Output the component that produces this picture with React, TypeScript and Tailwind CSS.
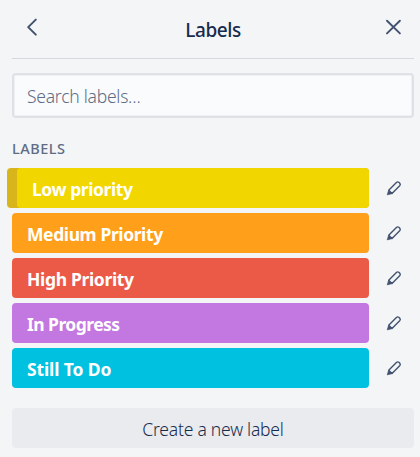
const labels = [
  { name: 'Low priority', color: 'bg-[#f2d600]', tracking: 'tracking-[-0.42px]', selected: true },
  { name: 'Medium Priority', color: 'bg-[#ff9f1a]', tracking: 'tracking-[-0.4px]', selected: false },
  { name: 'High Priority', color: 'bg-[#eb5a46]', tracking: 'tracking-[-0.34px]', selected: false },
  { name: 'In Progress', color: 'bg-[#c377e0]', tracking: 'tracking-[-0.55px]', selected: false },
  { name: 'Still To Do', color: 'bg-[#00c2e0]', tracking: 'tracking-[-0.12px]', selected: false },
];

function Pencil() {
  return (
    <svg width="16" height="16" viewBox="0 0 16 16" fill="none" stroke="#42526e" strokeWidth="1.4" strokeLinejoin="round">
      <path d="M2.7 10.2 10.4 2.5Q11.6 1.4 12.8 2.3L13.8 3.3Q14.8 4.6 13.7 5.8L6 13.5Z" />
      <path d="M2.5 10.4 1.2 14.9 5.8 13.7Z" fill="#42526e" strokeWidth="0.6" />
    </svg>
  );
}

export default function App() {
  return (
    <main className="h-[457px] w-[420px] overflow-hidden bg-[#f4f5f7] pl-3 pr-1.5 font-['Noto_Sans','Open_Sans',sans-serif] text-[#172b4d]">
      <header className="flex h-[59px] items-start justify-between border-b border-[#d5d8de]">
        <button aria-label="Back" className="ml-[10px] mt-[17px]">
          <svg width="20" height="20" viewBox="0 0 20 20" fill="none" stroke="#42526e" strokeWidth="2" strokeLinecap="round" strokeLinejoin="round">
            <path d="M13.8 2.6 6.2 10.1 13.8 17.6" />
          </svg>
        </button>
        <h1 className="mt-[15px] text-[19px] font-medium leading-[30px] tracking-[-0.45px]">Labels</h1>
        <button aria-label="Close" className="mr-[10px] mt-[17px]">
          <svg width="20" height="20" viewBox="0 0 20 20" fill="none" stroke="#42526e" strokeWidth="1.9" strokeLinecap="round">
            <path d="M3 3.7 15.9 16.4M15.9 3.7 3 16.4" />
          </svg>
        </button>
      </header>
      <input
        aria-label="Search labels"
        placeholder="Search labels…"
        className="mt-[14px] block h-[45px] w-full rounded-[4px] border-2 border-[#dfe1e6] bg-[#fafbfc] px-[13px] text-[17.5px] font-[350] tracking-[-0.25px] shadow-[inset_0_0_0_1px_#eef0f3] placeholder:text-[#5e6c84]"
      />
      <h2 className="mt-[19px] h-[31px] text-[14.5px] font-medium leading-[22px] tracking-[0.5px] text-[#5e6c84]">LABELS</h2>
      <ul className="flex flex-col gap-[5px]">
        {labels.map((label) => (
          <li key={label.name} className="flex h-10 items-center">
            <button
              className={`h-10 rounded-[4px] text-left text-[17.5px] font-bold leading-10 text-white ${label.tracking} ${
                label.selected ? '-ml-[5px] w-[362px] bg-[#d9b51c] pl-[10px]' : 'w-[357px]'
              }`}
            >
              <span className={`block h-10 rounded-[4px] pl-[15px] pt-[1px] ${label.color}`}>{label.name}</span>
            </button>
            <button aria-label={`Edit ${label.name}`} className="ml-[17px]">
              <Pencil />
            </button>
          </li>
        ))}
      </ul>
      <button className="mt-5 block h-10 w-full rounded-[4px] bg-[#eaebef] pt-[3px] text-[17.5px] font-[350] leading-[37px] tracking-[-0.23px]">Create a new label</button>
    </main>
  );
}
